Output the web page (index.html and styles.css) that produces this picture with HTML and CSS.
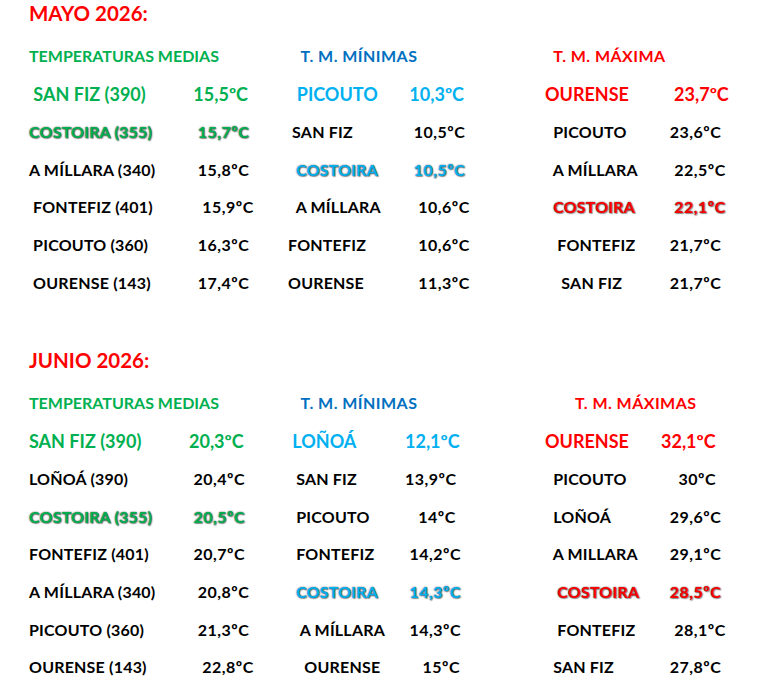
FILE: index.html
```html
<!DOCTYPE html>
<html lang="es">
<head>
<meta charset="utf-8">
<title>Temperaturas 2026</title>
<link rel="stylesheet" href="styles.css">
</head>
<body>
<main class="sheet">
  <section class="month">
    <h1 class="title">MAYO 2026:</h1>
    <div class="row head">
      <span class="h-med">TEMPERATURAS MEDIAS</span>
      <span class="h-min">   T. M. MÍNIMAS</span>
      <span class="h-max">  T. M. MÁXIMA</span>
    </div>
    <div class="row big">
      <span class="green"> SAN FIZ (390)</span><span class="green"> 15,5ºC</span>
      <span class="sky">  PICOUTO</span><span class="sky"> 10,3ºC</span>
      <span class="red">OURENSE</span><span class="red">   23,7ºC</span>
    </div>
    <div class="row">
      <span class="green glow">COSTOIRA (355)</span><span class="green glow">  15,7ºC</span>
      <span> SAN FIZ</span><span>  10,5ºC</span>
      <span>  PICOUTO</span><span>  23,6ºC</span>
    </div>
    <div class="row">
      <span>A MÍLLARA (340)</span><span>  15,8ºC</span>
      <span class="sky glow">  COSTOIRA</span><span class="sky glow">  10,5ºC</span>
      <span>  A MÍLLARA</span><span>   22,5ºC</span>
    </div>
    <div class="row">
      <span> FONTEFIZ (401)</span><span>   15,9ºC</span>
      <span>  A MÍLLARA</span><span>   10,6ºC</span>
      <span class="red glow">  COSTOIRA</span><span class="red glow">   22,1ºC</span>
    </div>
    <div class="row">
      <span> PICOUTO (360)</span><span>  16,3ºC</span>
      <span>FONTEFIZ</span><span>   10,6ºC</span>
      <span>   FONTEFIZ</span><span>  21,7ºC</span>
    </div>
    <div class="row">
      <span> OURENSE (143)</span><span>  17,4ºC</span>
      <span>OURENSE</span><span>   11,3ºC</span>
      <span>    SAN FIZ</span><span>  21,7ºC</span>
    </div>
  </section>

  <section class="month june">
    <h1 class="title">JUNIO 2026:</h1>
    <div class="row head">
      <span class="h-med">TEMPERATURAS MEDIAS</span>
      <span class="h-min">   T. M. MÍNIMAS</span>
      <span class="h-max">       T. M. MÁXIMAS</span>
    </div>
    <div class="row big">
      <span class="green">SAN FIZ (390)</span><span class="green">20,3ºC</span>
      <span class="sky"> LOÑOÁ</span><span class="sky">12,1ºC</span>
      <span class="red">OURENSE</span><span class="red">32,1ºC</span>
    </div>
    <div class="row">
      <span>LOÑOÁ (390)</span><span> 20,4ºC</span>
      <span>  SAN FIZ</span><span>13,9ºC</span>
      <span>  PICOUTO</span><span>    30ºC</span>
    </div>
    <div class="row">
      <span class="green glow">COSTOIRA (355)</span><span class="green glow"> 20,5ºC</span>
      <span>  PICOUTO</span><span>   14ºC</span>
      <span>  LOÑOÁ</span><span>  29,6ºC</span>
    </div>
    <div class="row">
      <span>FONTEFIZ (401)</span><span> 20,7ºC</span>
      <span>  FONTEFIZ</span><span> 14,2ºC</span>
      <span>  A MILLARA</span><span>  29,1ºC</span>
    </div>
    <div class="row">
      <span>A MÍLLARA (340)</span><span>  20,8ºC</span>
      <span class="sky glow">  COSTOIRA</span><span class="sky glow"> 14,3ºC</span>
      <span class="red glow">   COSTOIRA</span><span class="red glow">  28,5ºC</span>
    </div>
    <div class="row">
      <span>PICOUTO (360)</span><span>  21,3ºC</span>
      <span>   A MÍLLARA</span><span> 14,3ºC</span>
      <span>   FONTEFIZ</span><span>   28,1ºC</span>
    </div>
    <div class="row">
      <span>OURENSE (143)</span><span>   22,8ºC</span>
      <span>    OURENSE</span><span>    15ºC</span>
      <span>  SAN FIZ</span><span>  27,8ºC</span>
    </div>
  </section>
</main>
</body>
</html>
```
FILE: styles.css
```css
html, body {
  margin: 0;
  padding: 0;
  background: #ffffff;
}

body {
  font-family: Lato, "Open Sans", "Liberation Sans", sans-serif;
  font-weight: 700;
  color: #000000;
  width: 771px;
  height: 686px;
  overflow: hidden;
}

.sheet {
  display: flex;
  flex-direction: column;
}

.month {
  display: flex;
  flex-direction: column;
}

.june {
  margin-top: 45.5px;
}

.title {
  margin: 0;
  padding-left: 29px;
  height: 27px;
  display: flex;
  align-items: center;
  font-size: 20.5px;
  font-weight: 700;
  color: #ff0000;
  line-height: 1;
}

.row {
  display: grid;
  grid-template-columns: 160px 99px 117px 140px 116px 1fr;
  padding-left: 29px;
  height: 37.6px;
  align-items: center;
  white-space: pre;
  font-size: 16px;
  letter-spacing: 0.2px;
  line-height: 1;
}

/* temperature values (second cell of each pair) */
.row:not(.head) > span:nth-child(even) {
  letter-spacing: 0.5px;
}

.row.head {
  margin-top: 9.5px;
  height: 38.5px;
  font-size: 16px;
  letter-spacing: 0;
}

.row.big {
  height: 38.5px;
  font-size: 18px;
  letter-spacing: 0;
}

.row.big > span:nth-child(even) {
  letter-spacing: 0;
}

.h-med {
  grid-column: 1 / 3;
  color: #00b050;
}

.h-min {
  grid-column: 3 / 5;
  color: #0070c0;
  letter-spacing: 0.45px;
}

.h-max {
  grid-column: 5 / 7;
  color: #ff0000;
  letter-spacing: 0.45px;
}

.green { color: #00b050; }
.sky { color: #00b0f0; }
.red { color: #ff0000; }

.glow {
  text-shadow: 0 0 1.5px rgba(0, 0, 0, 0.85), 1px 1px 1px rgba(0, 0, 0, 0.35);
}
```
